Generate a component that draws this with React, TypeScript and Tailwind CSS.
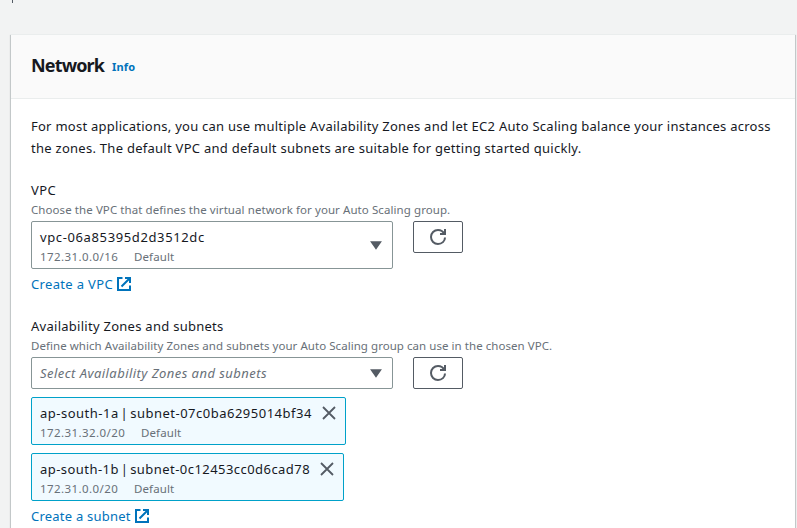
import type { ReactNode } from "react";

function ExternalIcon() {
  return (
    <svg width="14" height="14" viewBox="0 0 14 14" fill="none" stroke="#0073bb" strokeWidth="2" className="shrink-0">
      <path d="M8 1h5v5M4.500 9.500L13 1" />
      <path d="M13 8.500V13H1V1h4.500" />
    </svg>
  );
}

function RefreshButton() {
  return (
    <button className="flex h-8 w-[50px] items-center justify-center rounded-[2px] border border-[#545b64] bg-white">
      <svg width="16" height="16" viewBox="0 0 16 16" fill="none" stroke="#545b64" strokeWidth="2">
        <path d="M15 8.500c0 3.700-3.100 6.500-7 6.500s-7-3.100-7-7 3.100-7 7-7c2.800 0 5.200 1.600 6.300 4" />
        <path d="M10 5h5V0" />
      </svg>
    </button>
  );
}

function Caret() {
  return (
    <svg width="12" height="9" viewBox="0 0 12 9" className="shrink-0">
      <path d="M1.500 1h9L6 7.500z" fill="#545b64" stroke="#545b64" strokeWidth="1.500" />
    </svg>
  );
}

function CloseIcon() {
  return (
    <svg width="14" height="14" viewBox="0 0 14 14" fill="none" stroke="#545b64" strokeWidth="1.800" className="mt-1 shrink-0">
      <path d="M1 1l12 12M13 1L1 13" />
    </svg>
  );
}

function Link({ children }: { children: ReactNode }) {
  return (
    <a className="flex h-[22px] items-center gap-1 text-[#0073bb]">
      {children}
      <ExternalIcon />
    </a>
  );
}

function Meta({ cidr, width }: { cidr: string; width: string }) {
  return (
    <div className="flex h-4 items-center pt-px text-[11.5px] leading-4 text-[#687078]">
      <span className={`${width} tracking-[0.42px]`}>{cidr}</span>
      <span className="tracking-[0.12px]">Default</span>
    </div>
  );
}

export default function App() {
  return (
    <div className="h-[528px] w-[797px] overflow-hidden whitespace-nowrap bg-[#f2f3f3] pl-[11px] font-['Noto_Sans',sans-serif] text-[13px] leading-[22px] text-[#16191f]">
      <div className="h-[34px]">
        <div className="ml-px h-[3px] w-px bg-[#545b64]" />
      </div>
      <section className="h-[520px] w-[784px] bg-white shadow-[0_1px_1px_0_rgba(0,28,36,0.3),1px_1px_1px_0_rgba(0,28,36,0.15),-1px_1px_1px_0_rgba(0,28,36,0.15)]">
        <header className="flex h-[65px] items-center border-y border-[#eaeded] bg-[#fafafa] px-5 pb-1">
          <h2 className="w-[81px] text-[18px] font-bold tracking-[-0.85px]">Network</h2>
          <a className="mt-[5px] text-[11px] font-bold tracking-[0.15px] text-[#0073bb]">Info</a>
        </header>
        <div className="px-5 pt-4">
          <p>
            <span className="block tracking-[0.256px]">For most applications, you can use multiple Availability Zones and let EC2 Auto Scaling balance your instances across</span>
            <span className="block tracking-[0.27px]">the zones. The default VPC and default subnets are suitable for getting started quickly.</span>
          </p>

          <div className="mt-5">
            <div className="tracking-[0.45px]">VPC</div>
            <div className="h-5 text-[11.5px] leading-[18px] tracking-[0.08px] text-[#687078]">Choose the VPC that defines the virtual network for your Auto Scaling group.</div>
            <div className="flex items-start gap-5">
              <div className="flex h-12 w-[362px] items-center justify-between rounded-[2px] border border-[#879596] pl-2 pr-[10px]">
                <div>
                  <div className="tracking-[0.62px]">vpc-06a85395d2d3512dc</div>
                  <Meta cidr="172.31.0.0/16" width="w-[94px]" />
                </div>
                <Caret />
              </div>
              <RefreshButton />
            </div>
            <div className="mt-1"><Link><span className="tracking-[0.34px]">Create a VPC</span></Link></div>
          </div>

          <div className="mt-5">
            <div className="tracking-[0.27px]">Availability Zones and subnets</div>
            <div className="h-5 text-[11.5px] leading-[18px] tracking-[0.05px] text-[#687078]">Define which Availability Zones and subnets your Auto Scaling group can use in the chosen VPC.</div>
            <div className="flex items-start gap-5">
              <div className="flex h-8 w-[362px] items-center justify-between rounded-[2px] border border-[#879596] pl-2 pr-[10px]">
                <span className="italic tracking-[0.45px] text-[#687078]">Select Availability Zones and subnets</span>
                <Caret />
              </div>
              <RefreshButton />
            </div>
            <div className="mt-2 flex h-12 w-[315px] justify-between rounded-[2px] border border-[#00a1c9] bg-[#f1faff] pl-2 pr-[9px] pt-1">
              <div>
                <div className="tracking-[0.5px] [word-spacing:-2px]">ap-south-1a | subnet-07c0ba6295014bf34</div>
                <Meta cidr="172.31.32.0/20" width="w-[101px]" />
              </div>
              <CloseIcon />
            </div>
            <div className="mt-2 flex h-12 w-[313px] justify-between rounded-[2px] border border-[#00a1c9] bg-[#f1faff] pl-2 pr-[9px] pt-1">
              <div>
                <div className="tracking-[0.45px] [word-spacing:-2px]">ap-south-1b | subnet-0c12453cc0d6cad78</div>
                <Meta cidr="172.31.0.0/20" width="w-[94px]" />
              </div>
              <CloseIcon />
            </div>
            <div className="mt-1"><Link><span className="tracking-[0.22px]">Create a subnet</span></Link></div>
          </div>
        </div>
      </section>
    </div>
  );
}
